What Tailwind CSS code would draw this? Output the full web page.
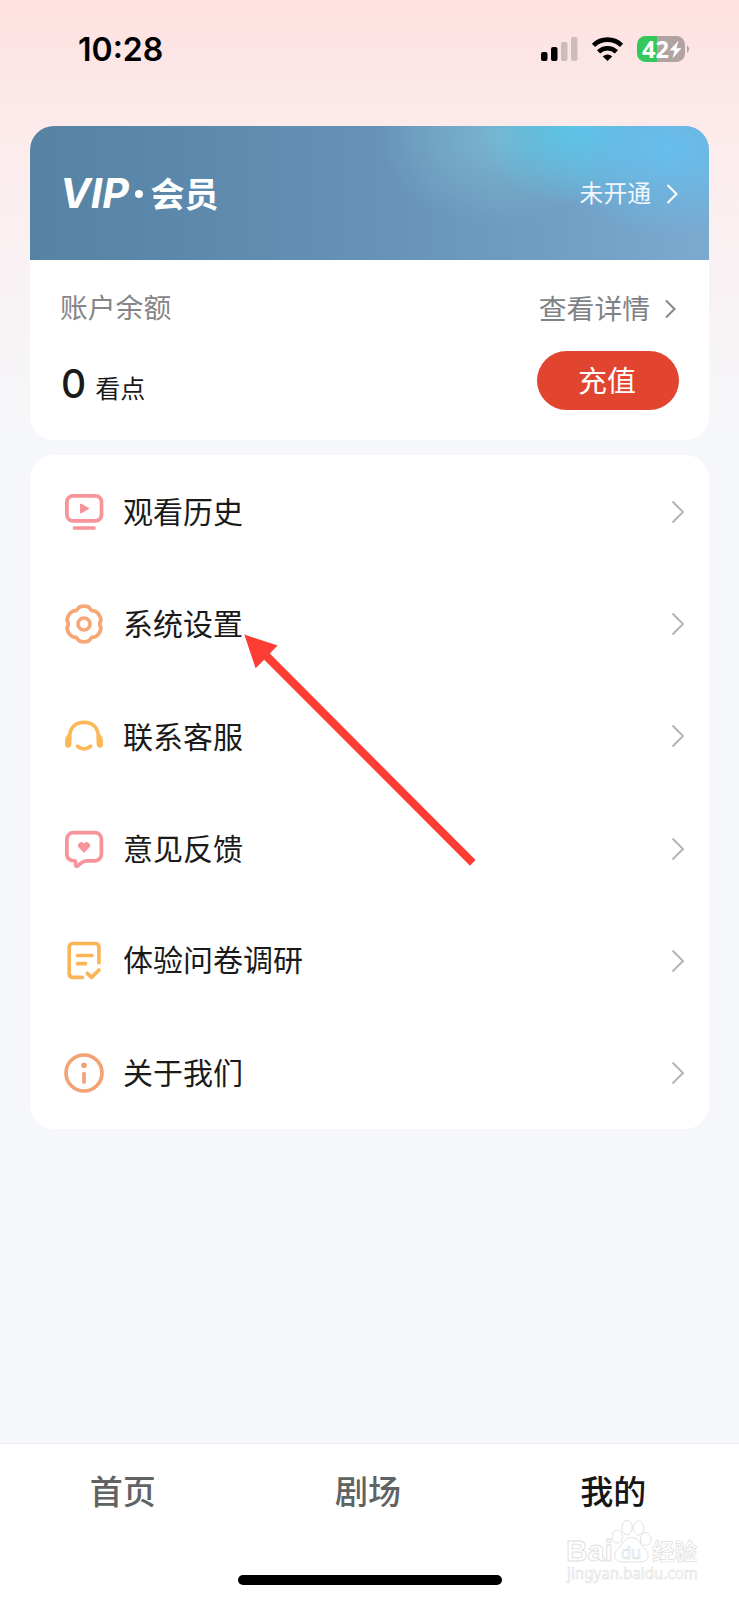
<!DOCTYPE html>
<html lang="zh-CN">
<head>
<meta charset="utf-8">
<title>我的</title>
<script src="https://cdn.jsdelivr.net/npm/@tailwindcss/browser@4"></script>
</head>
<body class="bg-[#f6f7fa]">
<div class="relative flex h-[1600px] w-[739px] flex-col overflow-hidden bg-[linear-gradient(180deg,#ffe1e0_0px,#fce6e6_70px,#fdebeb_130px,#f9f1f3_260px,#f6f7fa_430px)] font-['Inter','Noto_Sans_CJK_SC',sans-serif] text-[#1a1a1a]">

  <!-- status bar -->
  <header class="flex h-[126px] items-start justify-between pt-[31px] pr-[48px] pl-[78px]">
    <div class="text-[32px] leading-[38px] font-semibold text-black">10:28</div>
    <svg class="-mt-[5px] overflow-visible" width="152" height="48" viewBox="539 26 152 48">
      <rect x="541" y="52" width="6.5" height="9" rx="2"/>
      <rect x="551" y="47" width="6.5" height="14" rx="2"/>
      <rect x="561" y="42" width="6.5" height="19" rx="2" fill="#cdbcbc"/>
      <rect x="571" y="37" width="6.5" height="24" rx="2" fill="#cdbcbc"/>
      <g fill="none" stroke="#000" stroke-width="4.6">
        <path d="M593.5 45.3a20 20 0 0 1 28 0"/>
        <path d="M598.6 51.9a12.7 12.7 0 0 1 17.8 0"/>
      </g>
      <path d="M607.5 61l-4.700-4.500a6.700 6.700 0 0 1 9.400 0z"/>
      <path d="M645.500 36H657.700V62H645.500A8.500 8.500 0 0 1 637 53.500V44.500A8.500 8.500 0 0 1 645.500 36z" fill="#34c759"/>
      <path d="M657.700 36H676.500A8.500 8.500 0 0 1 685 44.500V53.500A8.500 8.500 0 0 1 676.500 62H657.700z" fill="#b0a3a2"/>
      <path d="M687 45.500a4.500 4.500 0 0 1 0 7.500z" fill="#b0a3a2"/>
      <text x="642" y="57.700" fill="#fff" font-family="Noto Sans" font-weight="700" font-size="24" textLength="27" lengthAdjust="spacingAndGlyphs">42</text>
      <path d="M678.500 40.500L669.500 50.500H674.500L672.500 58.500L681.500 48.300H676.500z" fill="#fff"/>
    </svg>
  </header>

  <main class="flex flex-1 flex-col gap-[15px] px-[30px]">
    <!-- membership and balance -->
    <section class="h-[314px] overflow-hidden rounded-[24px] bg-white">
      <div class="flex h-[134px] items-center justify-between bg-[radial-gradient(ellipse_130px_90px_at_640px_22px,#66bfed_0%,#66bfed00_100%),radial-gradient(ellipse_100px_80px_at_545px_0px,#58c6e6_0%,#58c6e600_100%),radial-gradient(ellipse_120px_90px_at_470px_10px,#7ab4d0_0%,#7ab4d000_100%),linear-gradient(90deg,#5683a3_0%,#5e8bae_30%,#6793b8_52%,#709dc2_75%,#7ba9d0_100%)] pr-[30px] pl-[31px]">
        <svg class="overflow-visible" width="160" height="60" viewBox="61 163 160 60" fill="#fff">
          <text x="60" y="208" font-family="Inter" font-style="italic" font-weight="700" font-size="40.500" textLength="69" lengthAdjust="spacingAndGlyphs">VIP</text>
          <circle cx="139" cy="194" r="4"/>
          <text x="150.500" y="206.500" font-family="Noto Sans CJK SC" font-weight="700" font-size="34">会员</text>
        </svg>
        <div class="flex items-center gap-[15px] pt-[2px] text-[23.800px] text-[#f0f6fb]">
          <span>未开通</span>
          <svg width="13" height="22" viewBox="0 0 13 22" fill="none" stroke="#fff" stroke-width="2.100"><path d="M1.500 2l9 9-9 9"/></svg>
        </div>
      </div>
      <div class="flex justify-between pr-[30px] pl-[30px]">
        <div class="flex flex-col pt-[28px]">
          <div class="text-[27.800px] leading-[40px] text-[#868686]">账户余额</div>
          <div class="mt-[28px] flex items-baseline gap-[9px] pl-px leading-[56px]"><span class="text-[39px] font-medium">0</span><span class="text-[25px]">看点</span></div>
        </div>
        <div class="flex flex-col items-end pt-[29px]">
          <div class="flex items-center gap-[15px] text-[27.800px] leading-[40px] text-[#7f8386]">
            <span>查看详情</span>
            <svg width="14" height="22" viewBox="0 0 14 22" fill="none" stroke="#85888b" stroke-width="2.100"><path d="M1 2.500l8.500 8.500L1 19.500"/></svg>
          </div>
          <button class="mt-[22px] flex h-[59px] w-[142px] items-center justify-center rounded-full bg-[#e1442f] pt-[2px] pr-[2px] text-[29px] leading-none text-white"><span>充值</span></button>
        </div>
      </div>
    </section>

    <!-- menu -->
    <nav class="grid h-[674px] grid-rows-6 rounded-[24px] bg-white pr-[24px] pl-[32px] text-[30px]">
      <a class="flex items-center pt-px">
        <svg width="44" height="44" viewBox="0 0 44 44" fill="none" stroke="#f6949a" stroke-width="3.700" stroke-linecap="round" stroke-linejoin="round"><rect x="4.900" y="5.900" width="34.600" height="25" rx="6"/><path d="M12.500 38H32"/><path d="M19 14.500v8l7-4z" fill="#f6949a" stroke-width="2"/></svg>
        <span class="ml-[17px] flex-1 pt-px">观看历史</span>
        <svg width="14" height="24" viewBox="0 0 14 24" fill="none" stroke="#b4b4b4" stroke-width="2"><path d="M1.500 1.500L12 12 1.500 22.500"/></svg>
      </a>
      <a class="flex items-center pt-px">
        <svg width="44" height="44" viewBox="0 0 44 44" fill="none" stroke="#f7a777" stroke-width="3.700" stroke-linejoin="round"><path d="M17 5.300Q22 3 27 5.300C29 8.500 30 9.200 33.500 9.200Q38.300 12.500 38.900 17.800C37.200 21 37.200 23 38.900 26.200Q38.300 31.500 33.500 34.800C30 34.800 29 35.500 27 38.700Q22 41 17 38.700C15 35.500 14 34.800 10.500 34.800Q5.700 31.500 5.100 26.200C6.800 23 6.800 21 5.100 17.800Q5.700 12.500 10.500 9.200C14 9.200 15 8.500 17 5.300z"/><circle cx="22" cy="22" r="6"/></svg>
        <span class="ml-[17px] flex-1 pt-px">系统设置</span>
        <svg width="14" height="24" viewBox="0 0 14 24" fill="none" stroke="#b4b4b4" stroke-width="2"><path d="M1.500 1.500L12 12 1.500 22.500"/></svg>
      </a>
      <a class="flex items-center pt-[3px]">
        <svg width="44" height="44" viewBox="0 0 44 44" fill="none" stroke="#fcb757" stroke-width="3.700" stroke-linecap="round"><path d="M7.500 23C7.500 13 13 7.400 22 7.400S36.500 13 36.500 23"/><path d="M15.500 31.200Q22 36.500 28.500 31.200"/><path d="M6 19.500L9.500 21.500V29Q9 32.800 6 32.800T3 29.500V26Q3 22 6 19.500zM38 19.500L34.500 21.500V29Q35 32.800 38 32.800T41 29.500V26Q41 22 38 19.500z" fill="#fcb757" stroke="none"/></svg>
        <span class="ml-[17px] flex-1">联系客服</span>
        <svg class="-mt-[2px]" width="14" height="24" viewBox="0 0 14 24" fill="none" stroke="#b4b4b4" stroke-width="2"><path d="M1.500 1.500L12 12 1.500 22.500"/></svg>
      </a>
      <a class="flex items-center pt-px">
        <svg width="44" height="44" viewBox="0 0 44 44" fill="none" stroke="#f6949a" stroke-width="3.700" stroke-linejoin="round"><path d="M11.500 5.600H32.800A6.500 6.500 0 0 1 39.400 12.100V27.300A6.500 6.500 0 0 1 32.800 33.800H24.500Q21 34 18.500 36.500L15.800 38.800Q13.500 40.300 13.500 37V34Q4.900 34 4.900 27V12.100A6.500 6.500 0 0 1 11.500 5.600z"/><path d="M22 25.500L16.800 20.300A3.100 3.100 0 0 1 22 16.900A3.100 3.100 0 0 1 27.200 20.300z" fill="#f6949a" stroke-width="0.800"/></svg>
        <span class="ml-[17px] flex-1 pt-[2px]">意见反馈</span>
        <svg width="14" height="24" viewBox="0 0 14 24" fill="none" stroke="#b4b4b4" stroke-width="2"><path d="M1.500 1.500L12 12 1.500 22.500"/></svg>
      </a>
      <a class="flex items-center pt-px">
        <svg width="44" height="44" viewBox="0 0 44 44" fill="none" stroke="#f9b558" stroke-width="3.700" stroke-linecap="round" stroke-linejoin="round"><path d="M36.900 23.700V8.500Q36.900 4.500 32.900 4.500H11.200Q7.200 4.500 7.200 8.500V34.400Q7.200 38.400 11.200 38.400H20.500M15.500 16.500H30M15.500 24.700H23.500M25.300 34.300L29.500 38.300L37 31"/></svg>
        <span class="ml-[17px] flex-1">体验问卷调研</span>
        <svg width="14" height="24" viewBox="0 0 14 24" fill="none" stroke="#b4b4b4" stroke-width="2"><path d="M1.500 1.500L12 12 1.500 22.500"/></svg>
      </a>
      <a class="flex items-center pt-px">
        <svg width="44" height="44" viewBox="0 0 44 44" fill="none" stroke="#f3a274" stroke-width="3.700" stroke-linecap="round"><circle cx="22" cy="22" r="18"/><circle cx="22" cy="14.300" r="2.800" fill="#f3a274" stroke="none"/><path d="M22 22.500V31"/></svg>
        <span class="ml-[17px] flex-1">关于我们</span>
        <svg width="14" height="24" viewBox="0 0 14 24" fill="none" stroke="#b4b4b4" stroke-width="2"><path d="M1.500 1.500L12 12 1.500 22.500"/></svg>
      </a>
    </nav>
  </main>

  <!-- tab bar -->
  <footer class="flex h-[157px] flex-col items-center border-t border-[#e9ebee] bg-white">
    <div class="grid w-full grid-cols-3 pt-[24px] pr-[3px] text-center text-[33px] leading-[48px] font-medium text-[#606364]">
      <span>首页</span><span>剧场</span><span class="text-[#171717]">我的</span>
    </div>
    <div class="mt-[59px] h-[10px] w-[264px] rounded-full bg-black"></div>
  </footer>

  <!-- watermark -->
  <svg class="absolute top-[1505px] left-[562px] overflow-visible" width="142" height="88" viewBox="562 1505 142 88" fill="#fff" stroke="#dedede" stroke-width="0.900">
    <text x="566" y="1561" font-family="Liberation Sans" font-weight="700" font-size="30" textLength="47" lengthAdjust="spacingAndGlyphs">Bai</text>
    <ellipse cx="617.300" cy="1536.500" rx="5.300" ry="6.500"/>
    <ellipse cx="627" cy="1527.500" rx="5.200" ry="7.200"/>
    <ellipse cx="638.500" cy="1528" rx="5.200" ry="7"/>
    <ellipse cx="645.700" cy="1539" rx="5.300" ry="6.500"/>
    <path d="M631.500 1537.500C639 1537.500 640 1544 645 1549C651 1555 648 1562 640 1562H623C614 1562 612 1554 618 1549C623 1545 623 1537.500 631.500 1537.500z"/>
    <text x="621" y="1558.500" font-family="Liberation Sans" font-size="19" textLength="20" lengthAdjust="spacingAndGlyphs" stroke-width="0.700">du</text>
    <text x="652" y="1560" font-family="Noto Sans CJK SC" font-weight="700" font-size="23" stroke-width="0.700" textLength="45" lengthAdjust="spacingAndGlyphs">经验</text>
    <text x="567" y="1579" font-family="Noto Sans" font-size="15.500" stroke-width="0.600" textLength="131" lengthAdjust="spacingAndGlyphs">jingyan.baidu.com</text>
  </svg>

  <!-- pointer to system settings -->
  <svg class="absolute top-[630px] left-[240px]" width="240" height="240" viewBox="240 630 240 240"><path d="M244.300 634.600L277.600 645.400L269.800 653.600L475.600 860L470 865.700L264.200 659.700L255.600 668.300z" fill="#fc3d34"/></svg>
</div>
</body>
</html>
